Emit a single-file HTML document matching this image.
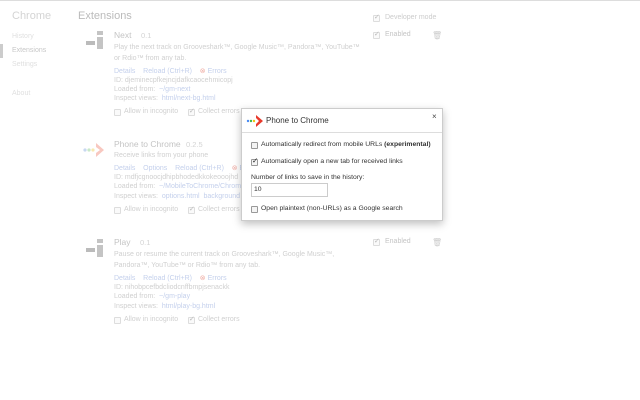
<!DOCTYPE html>
<html><head><style>
*{margin:0;padding:0;box-sizing:border-box}
body{width:640px;height:400px;background:#fff;font-family:"Liberation Sans","DejaVu Sans",sans-serif;position:relative;overflow:hidden;border-top:1px solid #ddd}
.a{position:absolute;white-space:nowrap;font-size:7px;color:#d0d0d0}
.t{font-size:8.5px;color:#c4c4c4}
.v{font-size:7.5px;color:#d4d4d4}
.l{color:#c4d0ec}
.cb{position:absolute;width:7px;height:7px;border:1px solid #ddd;border-radius:1px;background:#fafafa}
.ck::after{content:"✓";position:absolute;left:0;top:-3px;font-size:7px;color:#bbb}
.ic{position:absolute}
.d{position:absolute;left:241px;top:107px;width:202px;height:113px;background:#fff;border:1px solid #ccc;box-shadow:0 3px 8px rgba(0,0,0,.25);font-size:6.8px;color:#333}
.d .a{color:#333;font-size:6.8px}
.d .cb{border-color:#999;background:#f4f4f4}
.d .ck::after{color:#222;font-size:7.5px;top:-4px}
</style></head><body>
<div class="a" style="left:12px;top:9px;font-size:11px;color:#d4d4d4">Chrome</div>
<div class="a" style="left:78px;top:9px;font-size:11px;color:#bbb">Extensions</div>
<div style="position:absolute;left:0;top:43px;width:3px;height:14px;background:#ccc"></div>
<div class="a" style="left:12px;top:32px;color:#e0e0e0">History</div>
<div class="a" style="left:12px;top:46px;color:#c8c8c8">Extensions</div>
<div class="a" style="left:12px;top:60px;color:#e0e0e0">Settings</div>
<div class="a" style="left:12px;top:89px;color:#e0e0e0">About</div>

<div class="cb ck" style="left:373px;top:14px"></div><div class="a" style="left:385px;top:13px;color:#ccc">Developer mode</div>

<!-- Next -->
<div class="ic" style="left:86px;top:40px;width:9px;height:4px;background:#bbb"></div>
<div class="ic" style="left:97px;top:30px;width:6px;height:4px;background:#c4c4c4"></div>
<div class="ic" style="left:97px;top:36px;width:6px;height:12px;background:#c4c4c4"></div>
<div class="a t" style="left:114px;top:29px">Next</div><div class="a v" style="left:141px;top:30px">0.1</div>
<div class="a" style="left:114px;top:43px">Play the next track on Grooveshark™, Google Music™, Pandora™, YouTube™</div>
<div class="a" style="left:114px;top:54px">or Rdio™ from any tab.</div>
<div class="a l" style="left:114px;top:66px">Details&nbsp;&nbsp;&nbsp; Reload (Ctrl+R)&nbsp;&nbsp;&nbsp; <span style="color:#f0b0a8">⊗</span> Errors</div>
<div class="a" style="left:114px;top:76px">ID: djeminecpfkejncjdafkcaocehmicopj</div>
<div class="a" style="left:114px;top:85px">Loaded from:&nbsp; <span class="l">~/gm-next</span></div>
<div class="a" style="left:114px;top:94px">Inspect views:&nbsp; <span class="l">html/next-bg.html</span></div>
<div class="cb" style="left:114px;top:108px"></div><div class="a" style="left:124px;top:107px">Allow in incognito</div>
<div class="cb ck" style="left:188px;top:108px"></div><div class="a" style="left:198px;top:107px">Collect errors</div>
<div class="cb ck" style="left:373px;top:31px"></div><div class="a" style="left:385px;top:30px;color:#c4c4c4">Enabled</div>
<div class="a" style="left:432px;top:30px;color:#ccc;font-size:8px">🗑</div>

<!-- Phone -->
<svg class="ic" style="left:82px;top:140px" width="26" height="18"><circle cx="3" cy="9" r="1.6" fill="#c8d8f0"/><circle cx="7" cy="9" r="1.6" fill="#c8e8c8"/><circle cx="11" cy="9" r="1.6" fill="#f8e8b0"/><path d="M14 2 L22 9 L14 16 L14 12 L18 9 L14 6Z" fill="#f8c8c0"/></svg>
<div class="a t" style="left:114px;top:138px">Phone to Chrome</div><div class="a v" style="left:186px;top:139px">0.2.5</div>
<div class="a" style="left:114px;top:151px">Receive links from your phone</div>
<div class="a l" style="left:114px;top:163px">Details&nbsp;&nbsp;&nbsp; Options&nbsp;&nbsp;&nbsp; Reload (Ctrl+R)&nbsp;&nbsp;&nbsp; <span style="color:#f0b0a8">⊗</span> E</div>
<div class="a" style="left:114px;top:173px">ID: mdfjcgnoocjdhipbhodedkkokeooojhd</div>
<div class="a" style="left:114px;top:182px">Loaded from:&nbsp; <span class="l">~/MobileToChrome/Chrome</span></div>
<div class="a" style="left:114px;top:192px">Inspect views:&nbsp; <span class="l">options.html&nbsp; background</span></div>
<div class="cb" style="left:114px;top:206px"></div><div class="a" style="left:124px;top:205px">Allow in incognito</div>
<div class="cb ck" style="left:188px;top:206px"></div><div class="a" style="left:198px;top:205px">Collect errors</div>

<!-- Play -->
<div class="ic" style="left:86px;top:247px;width:9px;height:4px;background:#bbb"></div>
<div class="ic" style="left:97px;top:238px;width:6px;height:4px;background:#c4c4c4"></div>
<div class="ic" style="left:97px;top:244px;width:6px;height:12px;background:#c4c4c4"></div>
<div class="a t" style="left:114px;top:236px">Play</div><div class="a v" style="left:140px;top:237px">0.1</div>
<div class="a" style="left:114px;top:250px">Pause or resume the current track on Grooveshark™, Google Music™,</div>
<div class="a" style="left:114px;top:261px">Pandora™, YouTube™ or Rdio™ from any tab.</div>
<div class="a l" style="left:114px;top:273px">Details&nbsp;&nbsp;&nbsp; Reload (Ctrl+R)&nbsp;&nbsp;&nbsp; <span style="color:#f0b0a8">⊗</span> Errors</div>
<div class="a" style="left:114px;top:283px">ID: nihobpcefbdcliodcnffbmpjsenackk</div>
<div class="a" style="left:114px;top:292px">Loaded from:&nbsp; <span class="l">~/gm-play</span></div>
<div class="a" style="left:114px;top:302px">Inspect views:&nbsp; <span class="l">html/play-bg.html</span></div>
<div class="cb" style="left:114px;top:316px"></div><div class="a" style="left:124px;top:315px">Allow in incognito</div>
<div class="cb ck" style="left:188px;top:316px"></div><div class="a" style="left:198px;top:315px">Collect errors</div>
<div class="cb ck" style="left:373px;top:238px"></div><div class="a" style="left:385px;top:237px;color:#c4c4c4">Enabled</div>
<div class="a" style="left:432px;top:237px;color:#ccc;font-size:8px">🗑</div>

<div class="d">
<svg style="position:absolute;left:4px;top:5px" width="20" height="14"><circle cx="2" cy="7" r="1.2" fill="#4a8af4"/><circle cx="5" cy="7" r="1.2" fill="#3cba54"/><circle cx="8" cy="7" r="1.2" fill="#f4c20d"/><path d="M10 1 L17 7 L10 13 L10 10 L13 7 L10 4Z" fill="#e83a2c"/></svg>
<div class="a" style="left:24px;top:7px;font-size:8px">Phone to Chrome</div>
<div class="a" style="left:190px;top:3px;font-size:8px;color:#444">×</div>
<div style="position:absolute;left:0;top:23px;width:100%;height:1px;background:#ddd"></div>
<div class="cb" style="left:9px;top:33px"></div><div class="a" style="left:19px;top:32px">Automatically redirect from mobile URLs <b>(experimental)</b></div>
<div class="cb ck" style="left:9px;top:50px"></div><div class="a" style="left:19px;top:49px">Automatically open a new tab for received links</div>
<div class="a" style="left:9px;top:65px">Number of links to save in the history:</div>
<div style="position:absolute;left:9px;top:74px;width:77px;height:14px;border:1px solid #ccc"></div>
<div class="a" style="left:12px;top:77px">10</div>
<div class="cb" style="left:9px;top:97px"></div><div class="a" style="left:19px;top:96px">Open plaintext (non-URLs) as a Google search</div>
</div>
</body></html>
